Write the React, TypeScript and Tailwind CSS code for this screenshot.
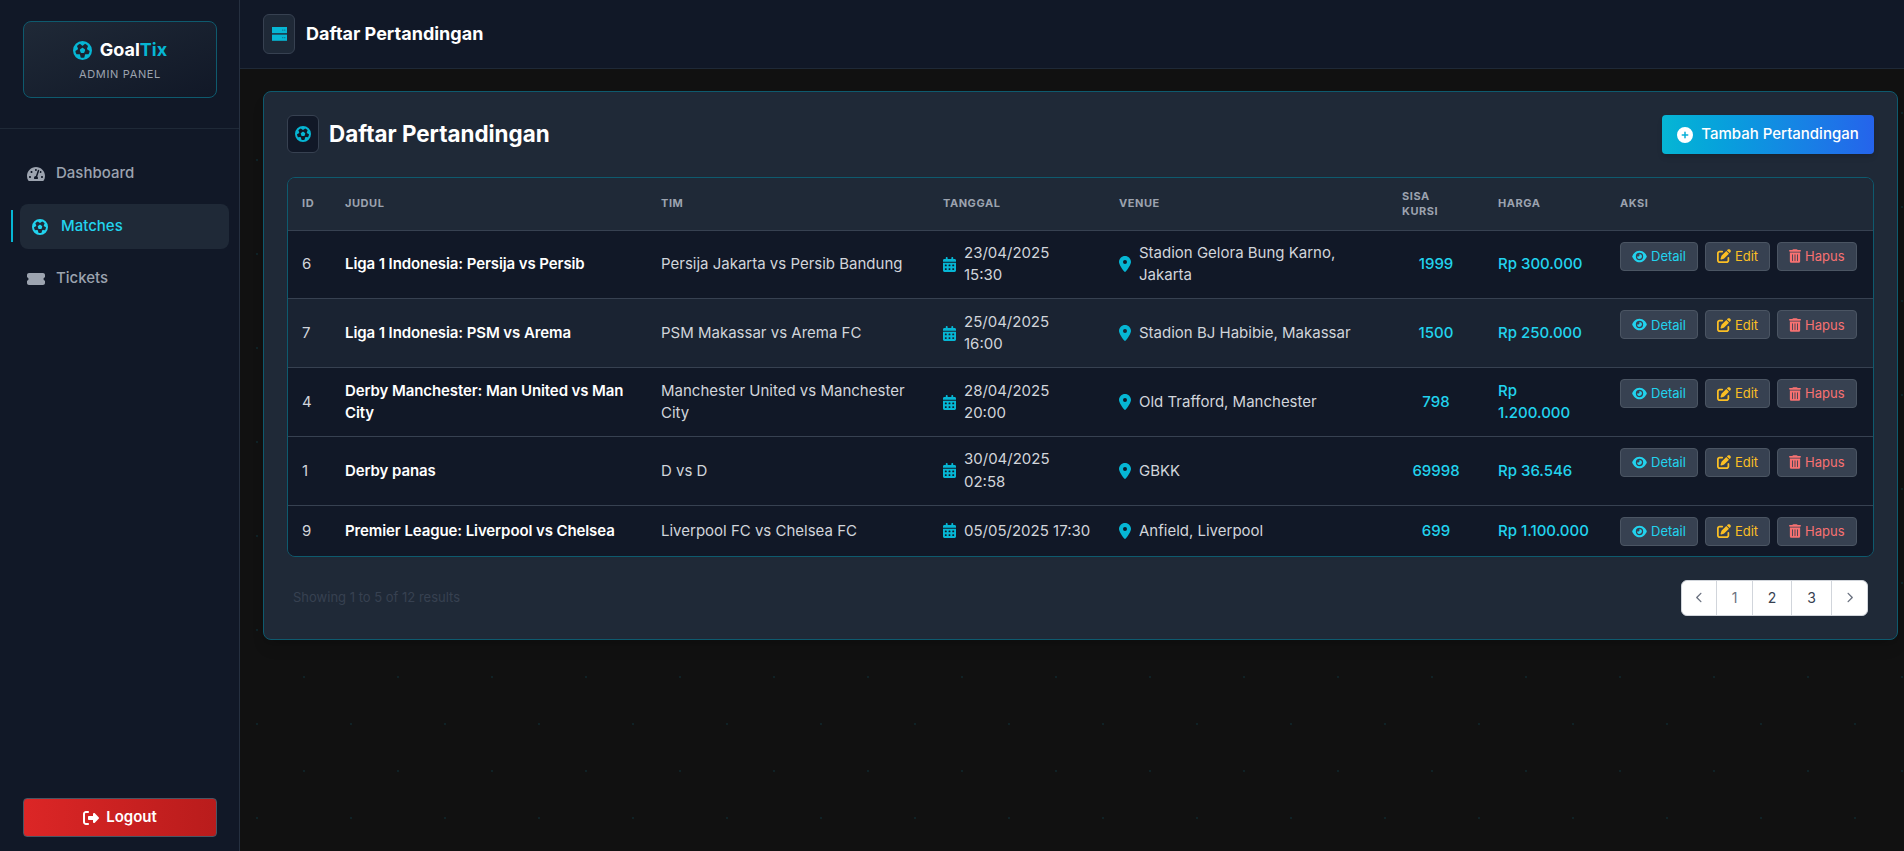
import React from 'react';
import { FaTachometerAlt } from 'react-icons/fa';
import {
  FaCalendarDays,
  FaChevronLeft,
  FaChevronRight,
  FaCirclePlus,
  FaEye,
  FaFutbol,
  FaLocationDot,
  FaPenToSquare,
  FaRightFromBracket,
  FaTicketSimple,
  FaTrashCan,
} from 'react-icons/fa6';

const matches = [
  { id: 6, title: 'Liga 1 Indonesia: Persija vs Persib', teams: 'Persija Jakarta vs Persib Bandung', date: '23/04/2025 15:30', venue: 'Stadion Gelora Bung Karno, Jakarta', seats: 1999, price: 'Rp 300.000' },
  { id: 7, title: 'Liga 1 Indonesia: PSM vs Arema', teams: 'PSM Makassar vs Arema FC', date: '25/04/2025 16:00', venue: 'Stadion BJ Habibie, Makassar', seats: 1500, price: 'Rp 250.000' },
  { id: 4, title: 'Derby Manchester: Man United vs Man City', teams: 'Manchester United vs Manchester City', date: '28/04/2025 20:00', venue: 'Old Trafford, Manchester', seats: 798, price: 'Rp 1.200.000' },
  { id: 1, title: 'Derby panas', teams: 'D vs D', date: '30/04/2025 02:58', venue: 'GBKK', seats: 69998, price: 'Rp 36.546' },
  { id: 9, title: 'Premier League: Liverpool vs Chelsea', teams: 'Liverpool FC vs Chelsea FC', date: '05/05/2025 17:30', venue: 'Anfield, Liverpool', seats: 699, price: 'Rp 1.100.000' },
];

const columns = [
  { label: 'ID', width: 'w-[43px]' },
  { label: 'Judul', width: 'w-[316px]' },
  { label: 'Tim', width: 'w-[282px]' },
  { label: 'Tanggal', width: 'w-[176px]' },
  { label: 'Venue', width: 'w-[283px]' },
  { label: 'Sisa Kursi', width: 'w-[96px] pr-[30px]' },
  { label: 'Harga', width: 'w-[122px]' },
  { label: 'Aksi', width: 'w-[267px]' },
];

function ServerIcon() {
  return (
    <svg width="15" height="14" viewBox="0 0 15 14">
      <rect x="0" y="0" width="15" height="6.2" fill="#06b6d4" />
      <rect x="0" y="7.6" width="15" height="6.2" fill="#06b6d4" />
      <rect x="10" y="2.6" width="1.4" height="1" fill="#0e7490" />
      <rect x="12" y="2.6" width="1.4" height="1" fill="#0e7490" />
      <rect x="10" y="10.2" width="1.4" height="1" fill="#0e7490" />
      <rect x="12" y="10.2" width="1.4" height="1" fill="#0e7490" />
    </svg>
  );
}

function ActionButton({ icon, label, color }: { icon: React.ReactNode; label: string; color: string }) {
  return (
    <button className={`flex items-center gap-1 h-[29px] px-[11px] rounded border border-[#4b5563] bg-[#374151] text-[13px] ${color}`}>
      {icon}
      {label}
    </button>
  );
}

function Sidebar() {
  return (
    <aside className="w-[240px] shrink-0 h-full flex flex-col bg-[#111827] border-r border-[#263040]">
      <div className="h-[129px] pl-[23px] pr-[22px] pt-[21px] border-b border-[#1f2937]">
        <div className="h-[77px] rounded-lg border border-[#0e5a6e] bg-gradient-to-br from-[#1f2937] to-[#111827] flex flex-col items-center pt-[16px]">
          <div className="flex items-center gap-2">
            <FaFutbol className="text-[#06b6d4] text-[19px]" />
            <span className="text-[18px] leading-[24px] font-bold text-white">
              Goal<span className="text-[#06b6d4]">Tix</span>
            </span>
          </div>
          <div className="mt-[4px] text-[11px] leading-[16px] tracking-[0.06em] text-[#9ca3af]">ADMIN PANEL</div>
        </div>
      </div>

      <nav className="flex-1 pt-[22px] px-[20px] text-[15px] font-medium">
        <a className="flex items-center h-[45px] pl-[7px] text-[#9ca3af]">
          <FaTachometerAlt className="text-[18px] w-[18px]" />
          <span className="ml-[11px]">Dashboard</span>
        </a>
        <a className="relative flex items-center h-[45px] mt-[8px] pl-[12px] w-[209px] rounded-lg bg-[#1f2937] text-[#22d3ee]">
          <span className="absolute left-[-9px] top-[6px] h-[32px] w-[2px] bg-[#06b6d4]" />
          <FaFutbol className="text-[16px] w-[16px]" />
          <span className="ml-[13px]">Matches</span>
        </a>
        <a className="flex items-center h-[45px] mt-[7px] pl-[7px] text-[#9ca3af]">
          <FaTicketSimple className="text-[18px] w-[18px]" />
          <span className="ml-[11px]">Tickets</span>
        </a>
      </nav>

      <div className="pl-[23px] pr-[22px] pb-[14px]">
        <button className="w-full h-[39px] flex items-center justify-center gap-[7px] rounded border border-[#4b5563] bg-gradient-to-r from-[#dc2626] to-[#b91c1c] text-white text-[15px] font-semibold">
          <FaRightFromBracket className="text-[16px]" />
          Logout
        </button>
      </div>
    </aside>
  );
}

export default function App() {
  return (
    <div className="h-screen w-full flex overflow-hidden bg-[#111111] font-['Inter',sans-serif] bg-[image:radial-gradient(circle,#102226_1px,transparent_1.6px),radial-gradient(circle,#102226_1px,transparent_1.6px)] bg-[length:94px_94px] bg-[position:-25px_-28px,22px_19px]">
      <Sidebar />

      <div className="flex-1 min-w-0 flex flex-col">
        <header className="h-[69px] shrink-0 flex items-center pl-[23px] bg-[#111827] border-b border-[#1f2937]">
          <div className="w-[32px] h-[40px] rounded-md border border-[#374151] bg-[#1f2937] flex items-center justify-center">
            <ServerIcon />
          </div>
          <h1 className="ml-[11px] mb-[2px] text-[18px] font-bold text-white">Daftar Pertandingan</h1>
        </header>

        <main className="pl-[23px] pr-[6px] pt-[22px]">
          <section className="rounded-lg border border-[#0e5a6e] bg-[#1f2937] p-[23px] shadow-lg">
            <div className="flex items-start justify-between mb-[23px]">
              <div className="flex items-center h-[38px]">
                <div className="w-[32px] h-[38px] rounded-md border border-[#374151] bg-[#111827] flex items-center justify-center">
                  <FaFutbol className="text-[#06b6d4] text-[16px] mb-[1px]" />
                </div>
                <h2 className="ml-[10px] mb-[1px] text-[22.4px] font-bold text-white">Daftar Pertandingan</h2>
              </div>
              <button className="h-[39px] w-[212px] flex items-center justify-center gap-2 rounded bg-gradient-to-r from-[#06b6d4] to-[#2563eb] text-white text-[15px] font-medium shadow-md">
                <FaCirclePlus className="text-[16px]" />
                Tambah Pertandingan
              </button>
            </div>

            <div className="rounded-lg border border-[#0e5a6e] overflow-hidden">
              <table className="w-full table-fixed border-collapse text-[15px] leading-[22.4px]">
                <thead className="bg-[#1f2937]">
                  <tr className="h-[52px]">
                    {columns.map((c) => (
                      <th
                        key={c.label}
                        className={`px-3.5 ${c.width} text-left text-[11px] leading-[15px] font-bold uppercase tracking-wider text-[#9ca3af]`}
                      >
                        {c.label}
                      </th>
                    ))}
                  </tr>
                </thead>
                <tbody>
                  {matches.map((m, i) => (
                    <tr key={m.id} className={`border-t border-[#374151] ${i === 1 ? 'bg-[#1a2332]' : 'bg-[#111827]'}`}>
                      <td className="px-3.5 py-[11.5px] text-[#d1d5db]">{m.id}</td>
                      <td className="px-3.5 py-[11.5px] font-semibold tracking-[-0.1px] text-white">{m.title}</td>
                      <td className="px-3.5 py-[11.5px] text-[#d1d5db]">{m.teams}</td>
                      <td className="px-3.5 py-[11.5px] text-[#d1d5db]">
                        <div className="flex items-center gap-[8px]">
                          <FaCalendarDays className="text-[#06b6d4] w-[13px] h-[15px] shrink-0" />
                          <span>{m.date}</span>
                        </div>
                      </td>
                      <td className="px-3.5 py-[11.5px] text-[#d1d5db]">
                        <div className="flex items-center gap-[8px]">
                          <FaLocationDot className="text-[#06b6d4] w-[12px] h-[16px] shrink-0" />
                          <span>{m.venue}</span>
                        </div>
                      </td>
                      <td className="px-3.5 py-[11.5px] text-center font-medium text-[#22d3ee]">{m.seats}</td>
                      <td className="px-3.5 py-[11.5px] font-medium text-[#22d3ee]">{m.price}</td>
                      <td className="px-3.5 pt-[11px] pb-[10px] align-top">
                        <div className="flex gap-[7px]">
                          <ActionButton icon={<FaEye className="w-[15px] h-[13px]" />} label="Detail" color="text-[#22d3ee]" />
                          <ActionButton icon={<FaPenToSquare className="w-[14px] h-[14px]" />} label="Edit" color="text-[#fbbf24]" />
                          <ActionButton icon={<FaTrashCan className="w-[12px] h-[14px]" />} label="Hapus" color="text-[#f87171]" />
                        </div>
                      </td>
                    </tr>
                  ))}
                </tbody>
              </table>
            </div>

            <div className="flex items-center justify-between mt-[23px]">
              <p className="pl-[6px] text-[13px] text-[#374151]">Showing 1 to 5 of 12 results</p>
              <div className="flex h-[36px] mr-[6px] rounded-md border border-[#d1d5db] bg-white overflow-hidden text-[14px] divide-x divide-[#d1d5db]">
                <button className="w-[35px] flex items-center justify-center text-[#6b7280]"><FaChevronLeft className="text-[11px]" /></button>
                <button className="w-[36px] text-[#6b7280]">1</button>
                <button className="w-[39px] text-[#374151]">2</button>
                <button className="w-[40px] text-[#374151]">3</button>
                <button className="w-[35px] flex items-center justify-center text-[#6b7280]"><FaChevronRight className="text-[11px]" /></button>
              </div>
            </div>
          </section>
        </main>
      </div>
    </div>
  );
}
